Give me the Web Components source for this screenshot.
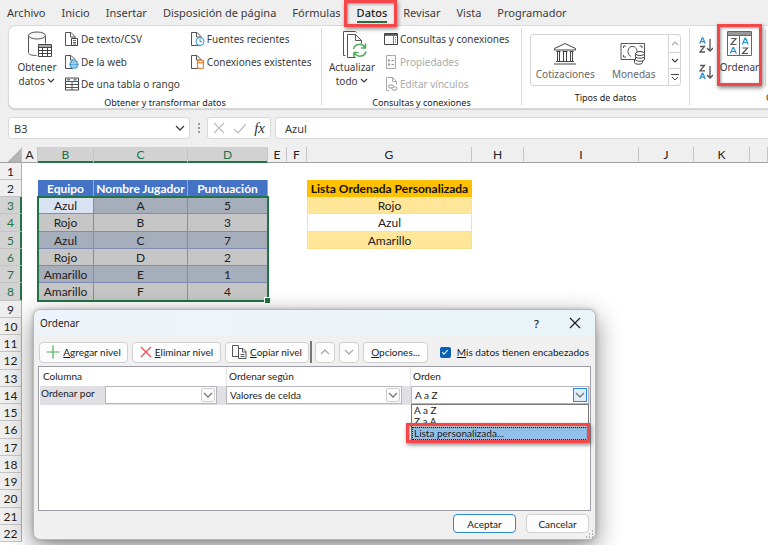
<!DOCTYPE html>
<html lang="es">
<head>
<meta charset="utf-8">
<title>Ordenar por lista personalizada</title>
<style>
html, body { height: 100%; margin: 0; }
body { overflow: hidden; font-family: "Noto Sans", "Open Sans", sans-serif; color: #3b3b3b; background: #fff; }
</style>
</head>
<body>
<excel-window></excel-window>
<script>
const define = (name, css, html, setup) => customElements.define(name, class extends HTMLElement {
  constructor() {
    super();
    const t = document.createElement('template');
    t.innerHTML = `<style>*{box-sizing:border-box}button,input,select{font:inherit;color:inherit;margin:0}:host{box-sizing:border-box}${css}</style>${html}`;
    this.attachShadow({ mode: 'open' }).append(t.content.cloneNode(true));
  }
  connectedCallback() { if (setup) setup(this, this.shadowRoot); }
});

const page = '<path d="M9 13.5H.5V.5h5.500l4 4v3M5.500.5v4.500h4.500" fill="#fff" stroke="#555"/>';
const icons = {
  db: [26, 28, '<g fill="none" stroke="#555"><path d="M1.500 4.500v17c0 2 3 3 8 3M18.500 4.500v8"/><ellipse cx="10" cy="4.500" rx="8.500" ry="3.500" fill="#f6f6f6"/></g><path d="M11.500 13.500h13v12h-13z" fill="#fff" stroke="#444"/><path d="M11.500 16.500h13M11.500 19.500h13M11.500 22.500h13M15.500 13.500v12M20.500 13.500v12" stroke="#444" fill="none"/><path d="M12 14h12v2H12z" fill="#aaa"/>'],
  csv: [14, 14, page + '<path d="M6.500 6.500h6v7h-6z" fill="#fff" stroke="#444"/><path d="M8 8.500h3M8 10.500h3M8 12h3" stroke="#444" stroke-width=".8"/>'],
  web: [14, 14, page + '<circle cx="9" cy="9.500" r="4.500" fill="#2690d8"/><path d="M5 8h8M5 11h8M9 5.500v8" stroke="#fff" stroke-width=".6"/><ellipse cx="9" cy="9.500" rx="2" ry="4" fill="none" stroke="#fff" stroke-width=".6"/>'],
  table: [14, 14, '<path d="M.5 1h13v12H.5z" fill="#fff" stroke="#444"/><path d="M.5 4.500h13M.5 7.500h13M.5 10.500h13M7 4v9" stroke="#555"/><path d="M2 2.800h3M8.500 2.800h3" stroke="#2690d8" stroke-width="1.600"/>'],
  recent: [14, 14, page + '<circle cx="9" cy="9.500" r="4" fill="#fff" stroke="#2690d8"/><path d="M9 7v2.700h2" stroke="#2690d8" fill="none"/>'],
  conn: [14, 14, page + '<path d="M6.500 6.500v6c0 1.400 6 1.400 6 0v-6" fill="#fff" stroke="#ed7d31" stroke-width="1.200"/><ellipse cx="9.500" cy="6.500" rx="3" ry="1.300" fill="#fff" stroke="#ed7d31" stroke-width="1.200"/>'],
  refresh: [26, 28, '<path d="M3.500 24.500h-2V.5h12l1 1M13.500 26.500h-8V3.500h8l6 6v3M13.500 3.500v6h6" fill="none" stroke="#555"/><g fill="none" stroke="#4ead5b" stroke-width="1.500"><path d="M11.500 18c1.200-5.500 9-6.300 11.500-1.500M23.500 12.500v4.500h-4.500M24 20.500c-1.200 5.500-9 6.300-11.500 1.500M12 26v-4.500h4.500"/></g>'],
  queries: [14, 12, '<path d="M.5.500h13v11H.5z" fill="#fff" stroke="#444"/><path d="M1 1.800h12" stroke="#555" stroke-width="2"/><path d="M9.500 3v8" stroke="#2690d8"/><path d="M11.500 4v6.500" stroke="#2690d8" stroke-dasharray="1.200 1"/>'],
  props: [12, 14, '<path d="M1.500.5h9v13h-9z" fill="#fafafa" stroke="#aaa"/><path d="M3 5.500h2M3 9.500h2" stroke="#999" stroke-width="2"/><path d="M6.500 5.500h2.500M6.500 9.500h2.500" stroke="#999"/>'],
  links: [13, 14, '<path d="M4 13.500H1.500V.5h6l4 4v3M7.500.500v4h4" fill="none" stroke="#aaa"/><g fill="#fff" stroke="#999"><rect x="3.500" y="8" width="5" height="3" rx="1.500"/><rect x="7" y="10" width="5" height="3" rx="1.500"/></g>'],
  bank: [24, 22, '<g fill="#fff" stroke="#444"><path d="M1.500 7v-1.500l10.500-5 10.500 5v1.500zM3 18.500h18M1 21h22"/><path d="M4.500 9v9.500M6.500 9v9.500M10.500 9v9.500M13.500 9v9.500M17.500 9v9.500M19.500 9v9.500M3.500 8.500h4M9.500 8.500h5M16.500 8.500h4"/></g>'],
  money: [27, 23, '<g fill="none" stroke="#555"><path d="M1 1.500h23.500v16H1z"/><path d="M3.500 6V4h2.500M19.500 4H22v2M3.500 13v2h2.500"/><path d="M11 14.500c-4-2-4-8 0-10h3c2 1.200 3 3 3 5"/></g><g fill="#fff" stroke="#444"><path d="M14.500 18v2.500c0 2.300 8 2.300 8 0V18"/><path d="M15.500 15v2.500c0 2.300 9 2.300 9 0V15"/><path d="M15.500 12v2.500c0 2.300 9 2.300 9 0V12"/><ellipse cx="20" cy="11.500" rx="4.500" ry="2"/></g>'],
  az: [14, 17, '<g fill="none" stroke-width="1.300"><path d="M.8 6.500 3.200.8h.6l2.400 5.700M1.700 4.700h3.600" stroke="#2690d8"/><path d="M1 9.500h4.500L1 15h5" stroke="#555"/><path d="M11 2v12M8 11l3 3 3-3" stroke="#555"/></g>'],
  za: [14, 17, '<g fill="none" stroke-width="1.300"><path d="M1 1.500h4.500L1 6.800h5" stroke="#555"/><path d="M.8 15 3.200 9.300h.6L6.200 15M1.700 13.200h3.600" stroke="#2690d8"/><path d="M11 2v12M8 11l3 3 3-3" stroke="#555"/></g>'],
  sort: [25, 25, '<path d="M.5.500h24v24H.5z" fill="#fff" stroke="#666"/><path d="M1 1h23v3H1z" fill="#999"/><path d="M.5 4.500h24M12.500 4v20" stroke="#666"/><g fill="none" stroke-width="1.200"><path d="M4 7.500h5L4 13.500h5.500M15.500 17h5l-5 5.500H21" stroke="#555"/><path d="M3.300 22.500 6 16.500h.6l2.700 6M4.300 20.500h4M15.300 13.500 18 7.200h.6l2.700 6.300M16.300 11.500h4" stroke="#2690d8"/></g>'],
  down: [8, 5, '<path d="M1 1l3 3 3-3" fill="none" stroke="currentColor" stroke-width="1.200"/>'],
  up: [8, 5, '<path d="M1 4l3-3 3 3" fill="none" stroke="currentColor" stroke-width="1.200"/>'],
  more: [8, 7, '<path d="M0 .5h8M1 3l3 3 3-3" fill="none" stroke="currentColor"/>'],
  x: [12, 12, '<path d="M1 1l10 10M11 1 1 11" fill="none" stroke="currentColor" stroke-width="1.100"/>'],
  check: [14, 12, '<path d="M1 7l4 4 8-9" fill="none" stroke="currentColor" stroke-width="1.200"/>'],
  plus: [14, 14, '<path d="M7 .5v13M.5 7h13" stroke="#4ead5b" stroke-width="1.200"/>'],
  copy: [15, 14, '<g fill="#fff" stroke="#555"><path d="M.5.500h6v11h-6z"/><path d="M6.500 3.500h4.500l3 3v7H6.500zM10.500 3.500v3.500H14M8.500 9.500h4M8.500 11.500h4"/></g>'],
  bigdown: [10, 6, '<path d="M1 1l4 4 4-4" fill="none" stroke="currentColor" stroke-width="1.300"/>'],
  bigup: [10, 6, '<path d="M1 5l4-4 4 4" fill="none" stroke="currentColor" stroke-width="1.300"/>'],
  grip: [8, 8, '<path d="M6 1h1M3 4h1M6 4h1M0 7h1M3 7h1M6 7h1" stroke="#999" stroke-width="1.500"/>']
};

define('ui-icon', ':host{display:inline-flex;flex:none}svg{display:block}', '', (el, root) => {
  const [w, h, body] = icons[el.getAttribute('name')];
  root.innerHTML += `<svg width="${w}" height="${h}" viewBox="0 0 ${w} ${h}" aria-hidden="true">${body}</svg>`;
});

/* Red callout drawn over whatever it contains. */
define('call-out', `:host{display:block;position:relative}
  :host::after{content:"";position:absolute;inset:var(--inset,0);border:3px solid #f5474a;box-shadow:1px 2px 4px #0007,inset 1px 1px 3px #0006;pointer-events:none;z-index:4}`, '<slot></slot>');

define('ribbon-tabs', `:host{display:flex;height:25px;align-items:center;padding-left:7px;gap:16px;font-size:11px}
  button{display:block;border:0;background:none;padding:0;line-height:20px;white-space:nowrap}
  .on{color:#222;font-weight:500;height:20px;border-bottom:2px solid #1e7145;line-height:16px;padding-top:2px}
  call-out{--inset:-3px -10px -4px -13px}
  `,
  `<button>Archivo</button><button>Inicio</button><button>Insertar</button><button>Disposición de página</button><button>Fórmulas</button>
  <call-out><button class="on">Datos</button></call-out><button>Revisar</button><button>Vista</button><button>Programador</button>`);

define('ribbon-group', `:host{display:flex;flex-direction:column;flex:none;border-right:1px solid #d8d8d8;margin:2px 0 3px}
  .c{display:flex;height:67px}
  .l{font-size:9px;line-height:15px;text-align:center;white-space:nowrap;color:#222}`,
  '<div class="c"><slot></slot></div><div class="l"><slot name="label"></slot></div>');

define('ribbon-item', `:host{display:block}
  button{display:flex;align-items:center;gap:2px;border:0;background:none;padding:0;height:22px;font-size:10px;line-height:14px;white-space:nowrap}
  .i{width:14px;display:flex;justify-content:center}
  :host([off]) button{color:#aaa}`,
  '<button><span class="i"></span><slot></slot></button>',
  (el, root) => {
    root.querySelector('.i').innerHTML = `<ui-icon name="${el.getAttribute('icon')}"></ui-icon>`;
    if (el.hasAttribute('off')) root.querySelector('button').disabled = true;
  });

define('ribbon-big', `:host{display:block;flex:none}
  button{display:flex;flex-direction:column;align-items:center;width:100%;border:0;background:none;padding:3px 0 0;font-size:10px;line-height:14px}
  .i{height:29px} .t{text-align:center;white-space:nowrap}
  ::slotted(ui-icon:not([slot])){vertical-align:2px}`,
  '<button><span class="i"><slot name="icon"></slot></span><span class="t"><slot></slot></span></button>');

define('data-gallery', `:host{display:flex;height:52px;border:1px solid #d4d4d4;border-radius:3px;color:#666;flex:1}
  .i{border:0;background:none;display:flex;flex-direction:column;justify-content:flex-end;align-items:center;gap:2px;padding:0 0 4px;font-size:10px;line-height:14px;flex:1}
  .s{width:12px;display:grid;grid-template-rows:1fr 1fr 1fr;border-left:1px solid #d4d4d4}
  .s button{border:0;border-top:1px solid #d4d4d4;background:none;padding:0;display:flex;align-items:center;justify-content:center;color:#444}
  .s button:first-child{border-top:0;color:#aaa}`,
  `<button class="i"><ui-icon name="bank"></ui-icon>Cotizaciones</button><button class="i"><ui-icon name="money"></ui-icon>Monedas</button>
  <div class="s"><button aria-label="Anterior"><ui-icon name="up"></ui-icon></button><button aria-label="Siguiente"><ui-icon name="down"></ui-icon></button><button aria-label="Más"><ui-icon name="more"></ui-icon></button></div>`);

define('ribbon-bar', `:host{display:flex;margin-left:8px;height:84px;background:#fff;border:1px solid #d9d9d9;border-right:0;border-radius:7px 0 0 7px;box-shadow:0 1px 1px #0002}
  .col{display:grid;grid-template-rows:22px 23px 22px;align-items:center}
  .g1{width:313px}.g2{width:200px}.g3{width:168px}.g4{width:160px;border:0}
  .b1{width:56px}.b2{width:60px}
  .b1 ui-icon[slot],.b2 ui-icon[slot]{padding-left:6px}
  .c2{margin-left:11px}.c3{margin-left:2px}
  data-gallery{margin:6px 8px 0}
  .sorts{display:flex;flex-direction:column;gap:10px;padding:9px 0 0 9px}
  .sorts button{border:0;padding:0;background:none;display:flex}
  call-out{width:45px;height:62px;margin-left:4px;margin-top:-4px;padding-top:4px}
  .edge{border-left:1px solid #d8d8d8;height:56px;margin:2px 0 0 3px}
  .last{display:block;text-align:left;padding-left:76px}`,
  `<ribbon-group class="g1">
    <ribbon-big class="b1"><ui-icon slot="icon" name="db"></ui-icon>Obtener<br>datos <ui-icon name="down"></ui-icon></ribbon-big>
    <div class="col"><ribbon-item icon="csv">De texto/CSV</ribbon-item><ribbon-item icon="web">De la web</ribbon-item><ribbon-item icon="table">De una tabla o rango</ribbon-item></div>
    <div class="col c2"><ribbon-item icon="recent">Fuentes recientes</ribbon-item><ribbon-item icon="conn">Conexiones existentes</ribbon-item></div>
    <span slot="label">Obtener y transformar datos</span></ribbon-group>
  <ribbon-group class="g2">
    <ribbon-big class="b2"><ui-icon slot="icon" name="refresh"></ui-icon>Actualizar<br>todo <ui-icon name="down"></ui-icon></ribbon-big>
    <div class="col c3"><ribbon-item icon="queries">Consultas y conexiones</ribbon-item><ribbon-item icon="props" off>Propiedades</ribbon-item><ribbon-item icon="links" off>Editar vínculos</ribbon-item></div>
    <span slot="label">Consultas y conexiones</span></ribbon-group>
  <ribbon-group class="g3"><data-gallery></data-gallery><span slot="label">Tipos de datos</span></ribbon-group>
  <ribbon-group class="g4">
    <div class="sorts"><button aria-label="Ordenar de A a Z"><ui-icon name="az"></ui-icon></button><button aria-label="Ordenar de Z a A"><ui-icon name="za"></ui-icon></button></div>
    <call-out><ribbon-big><ui-icon slot="icon" name="sort"></ui-icon>Ordenar</ribbon-big></call-out><div class="edge"></div>
    <span slot="label" class="last">O</span></ribbon-group>`);

define('formula-bar', `:host{display:flex;align-items:center;padding:8px 0 8px 8px;font-size:11px}
  .box{height:22px;background:#fff;border:1px solid #d9d9d9;border-radius:3px;display:flex;align-items:center}
  .name{width:182px;padding:0 4px 0 5px}
  .name input,.f input{border:0;background:none;padding:0;outline:0;flex:1;min-width:0}
  button{border:0;background:none;padding:0;display:flex}
  .dots{width:17px;display:grid;justify-content:center;gap:2px}.dots i{width:2px;height:2px;background:#999}
  .fx{width:64px;justify-content:space-between;padding:0 5px;color:#bbb;margin-right:4px}
  .fx .fn{font:italic 15px/16px "Liberation Serif",serif;color:#333}
  .f{flex:1;border-right:0;border-radius:3px 0 0 3px;padding-left:9px}`,
  `<div class="box name"><input value="B3" aria-label="Cuadro de nombres"><button aria-label="Abrir"><ui-icon name="bigdown"></ui-icon></button></div>
  <div class="dots"><i></i><i></i><i></i></div>
  <div class="box fx"><button aria-label="Cancelar"><ui-icon name="x"></ui-icon></button><button aria-label="Introducir"><ui-icon name="check"></ui-icon></button><button class="fn" aria-label="Insertar función">fx</button></div>
  <div class="box f"><input value="Azul" aria-label="Barra de fórmulas"></div>`);

define('sheet-grid', `:host{display:block;position:relative;flex:1;min-height:0;overflow:hidden;background:#fff;font:12px Lato,sans-serif;color:#222}
  table{border-collapse:separate;border-spacing:0;table-layout:fixed;width:100%}
  th,td{padding:1px 0 0;text-align:center;font-weight:400;line-height:14px;overflow:hidden;white-space:nowrap}
  tr{height:17px}tbody tr:nth-child(4n){height:18px}
  thead tr{height:16px}
  thead th{background:#efefef;border-right:1px solid #c4c4c4;border-bottom:1px solid #a0a0a0}
  thead th.s{background:#d2d2d2;color:#217346;border-bottom-color:#217346;box-shadow:inset 0 -1px #217346}
  thead th:first-child{background:linear-gradient(135deg,#efefef 0 62%,#b4b4b4 62%)}
  tbody th{background:#efefef;border-bottom:1px solid #c4c4c4;border-right:1px solid #b0b0b0}
  tbody th.s{background:#d2d2d2;color:#217346;border-right-color:#217346;box-shadow:inset -1px 0 #217346}
  .h{background:#4472c4;color:#fff;font-weight:700;border-right:1px solid #8ea9db}
  .o,.e,.a{border-right:1px solid #7d8db5;border-bottom:1px solid #7d8db5}
  .o{background:#a6adbb}.e{background:#c6c6c6}.a{background:#dae3f3}
  .gh{background:#ffc000;font-weight:700;color:#111}
  .gy{background:#ffe699}.gy,.gw{border:solid #ffe08a;border-width:0 1px 1px}
  .sel{position:absolute;left:37px;top:49px;width:232px;height:106px;border:2px solid #217346;pointer-events:none}
  .sel::after{content:"";position:absolute;right:-3px;bottom:-3px;width:5px;height:5px;background:#217346;border:solid #fff;border-width:1px 0 0 1px}`,
  '<table><colgroup></colgroup><thead></thead><tbody></tbody></table><div class="sel"></div>',
  (el, root) => {
    const widths = [22, 16, 56, 94, 80, 19, 20, 165, 52, 115, 55, 56];
    const letters = ['', ...'ABCDEFGHIJKL'];
    root.querySelector('colgroup').innerHTML = widths.map(w => `<col style="width:${w}px">`).join('') + '<col>';
    root.querySelector('thead').innerHTML = '<tr>' + letters.map(l => `<th scope="col" class="${'BCD'.includes(l) && l ? 's' : ''}">${l === 'L' ? '' : l}</th>`).join('') + '</tr>';
    const data = { 2: ['Equipo', 'Nombre Jugador', 'Puntuación'], 3: ['Azul', 'A', 5], 4: ['Rojo', 'B', 3], 5: ['Azul', 'C', 7], 6: ['Rojo', 'D', 2], 7: ['Amarillo', 'E', 1], 8: ['Amarillo', 'F', 4] };
    const list = { 2: ['gh', 'Lista Ordenada Personalizada'], 3: ['gy', 'Rojo'], 4: ['gw', 'Azul'], 5: ['gy', 'Amarillo'] };
    let html = '';
    for (let r = 1; r <= 22; r++) {
      html += `<tr><th scope="row" class="${r > 2 && r < 9 ? 's' : ''}">${r}</th><td></td>`;
      for (let c = 0; c < 3; c++) {
        const k = !data[r] ? '' : r === 2 ? 'h' : r === 3 && c === 0 ? 'a' : r % 2 ? 'o' : 'e';
        html += `<td class="${k}">${data[r] ? data[r][c] : ''}</td>`;
      }
      html += '<td></td><td></td>' + (list[r] ? `<td class="${list[r][0]}">${list[r][1]}</td>` : '<td></td>') + '<td></td>'.repeat(5) + '</tr>';
    }
    root.querySelector('tbody').innerHTML = html;
  });

define('dlg-button', `:host{display:block;flex:none}
  button{width:100%;height:100%;display:flex;align-items:center;justify-content:center;gap:3px;background:#fdfdfd;border:1px solid #d0d0d0;border-radius:4px;padding:0;color:#1b1b1b;white-space:nowrap}
  :host([primary]) button{border-color:#2a8ad8}:host([off]) button{color:#aaa}`, '<button><slot></slot></button>');

define('combo-box', `:host{display:block;position:relative;height:18px}
  select{appearance:none;width:100%;height:18px;border:1px solid #b4b4bc;border-radius:0;background:#fff;padding:0 20px 0 3px;color:#1b1b1b;outline:0}
  .b{position:absolute;right:2px;top:2px;width:14px;height:14px;border:1px solid #ccc;border-radius:2px;background:#fdfdfd;display:grid;place-items:center;color:#777;pointer-events:none}
  :host([open]) .b{background:#e0eef9;border-color:#2a8ad8;border-radius:0}`,
  '<select></select><span class="b"><ui-icon name="bigdown"></ui-icon></span><slot></slot>',
  (el, root) => { const s = root.querySelector('select'); s.add(new Option(el.getAttribute('value'))); s.setAttribute('aria-label', el.getAttribute('label')); });

define('option-list', `:host{position:absolute;left:0;right:0;top:18px;z-index:3;background:#fff;border:1px solid #777;display:block;line-height:11px;color:#1b1b1b}
  div{height:11px;padding-left:2px}.on{height:13px;line-height:13px;background:#91c1ea;outline:1px dotted #223;outline-offset:-1px}
  call-out{--inset:-4px -2px -3px -6px}`,
  '<div role="option">A a Z</div><div role="option">Z a A</div><call-out><div role="option" class="on">Lista personalizada...</div></call-out>');

define('sort-dialog', `:host{display:flex;flex-direction:column;position:absolute;left:33px;top:309px;width:563px;background:#f0f0f0;border:1px solid #b8b8b8;border-radius:7px;box-shadow:0 8px 26px #0007,0 0 4px #0003;font:10px Lato,sans-serif;color:#1b1b1b;z-index:2}
  header{display:flex;align-items:center;height:26px;background:linear-gradient(90deg,#eef3fa,#e9f4f8);border-radius:7px 7px 0 0;padding:0 14px 0 6px}
  h1{font:10px "Noto Sans",sans-serif;margin:0;flex:1}
  header button{border:0;background:none;padding:0;display:flex;font:500 11px "Noto Sans",sans-serif}
  header button+button{margin-left:30px}
  .bar{display:flex;align-items:center;padding:5px 6px 3px 5px;gap:4px}
  .bar dlg-button{height:21px}
  .w89{width:89px}.w84{width:84px}.w20{width:20px}.w65{width:65px}
  .v{width:2px;height:22px;background:#777;margin:0 -1px 0 -3px}
  label{display:flex;align-items:center;gap:6px;margin-left:auto;white-space:nowrap}
  input{appearance:none;width:11px;height:11px;border-radius:2px;background:#0560b6;display:grid;place-items:center}
  input::before{content:"";width:5px;height:2px;border:solid #fff;border-width:0 0 1px 1px;rotate:-45deg;margin-top:-2px}
  .list{margin:0 4px;height:145px;border:1px solid #9c9ca6;background:#fff}
  .r{display:grid;grid-template-columns:187px 184px 1fr;line-height:19px}
  .hd span{padding-left:4px}.hd span+span{border-left:1px solid #e8e8e8;padding-left:2px}
  .row{grid-template-columns:185px 185px 1fr;background:#e0dfe4;padding:0 1px 1px 0;margin-left:1px}
  .cell{display:flex;line-height:14px;padding-left:1px}
  .cell combo-box{flex:1}
  .cell .t{width:64px}
  .p{margin-right:8px}
  footer{display:flex;justify-content:flex-end;gap:10px;padding:3px 6px 6px;position:relative}
  footer dlg-button{width:63px;height:19px}
  .grip{position:absolute;right:1px;bottom:1px}`,
  `<header><h1>Ordenar</h1><button aria-label="Ayuda">?</button><button aria-label="Cerrar"><ui-icon name="x"></ui-icon></button></header>
  <div class="bar">
    <dlg-button class="w89"><ui-icon name="plus"></ui-icon><span><u>A</u>gregar nivel</span></dlg-button>
    <dlg-button class="w89"><ui-icon name="x" style="color:#e8484c"></ui-icon><span><u>E</u>liminar nivel</span></dlg-button>
    <dlg-button class="w84"><ui-icon name="copy"></ui-icon><span><u>C</u>opiar nivel</span></dlg-button>
    <div class="v"></div>
    <dlg-button class="w20" off aria-label="Subir"><ui-icon name="bigup"></ui-icon></dlg-button>
    <dlg-button class="w20" off aria-label="Bajar"><ui-icon name="bigdown"></ui-icon></dlg-button>
    <dlg-button class="w65"><span><u>O</u>pciones...</span></dlg-button>
    <label><input type="checkbox" checked><span><u>M</u>is datos tienen encabezados</span></label>
  </div>
  <div class="list">
    <div class="r hd"><span>Columna</span><span>Ordenar según</span><span>Orden</span></div>
    <div class="r row">
      <div class="cell p"><span class="t">Ordenar por</span><combo-box label="Ordenar por" value=""></combo-box></div>
      <div class="cell p"><combo-box label="Ordenar según" value="Valores de celda"></combo-box></div>
      <div class="cell"><combo-box label="Orden" value="A a Z" open><option-list role="listbox"></option-list></combo-box></div>
    </div>
  </div>
  <footer><dlg-button primary>Aceptar</dlg-button><dlg-button>Cancelar</dlg-button><ui-icon class="grip" name="grip"></ui-icon></footer>`);

define('excel-window', `:host{display:flex;flex-direction:column;height:100vh;position:relative;background:#efefef;overflow:hidden}`,
  `<ribbon-tabs></ribbon-tabs><ribbon-bar></ribbon-bar><formula-bar></formula-bar><sheet-grid></sheet-grid><sort-dialog></sort-dialog>`);
</script>
</body>
</html>
